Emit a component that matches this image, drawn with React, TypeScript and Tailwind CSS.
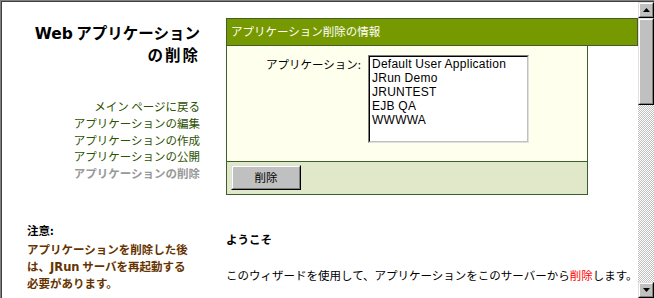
// Legacy JRun admin page: "Web アプリケーションの削除" wizard inside a classic window frame.
const JP = "font-['Noto_Sans_CJK_JP','Liberation_Sans',sans-serif]";

const NAV = [
  { label: "メイン ページに戻る", current: false },
  { label: "アプリケーションの編集", current: false },
  { label: "アプリケーションの作成", current: false },
  { label: "アプリケーションの公開", current: false },
  { label: "アプリケーションの削除", current: true },
];

const APPS = ["Default User Application", "JRun Demo", "JRUNTEST", "EJB QA", "WWWWA"];

function Bevel({ className, children }: { className?: string; children?: React.ReactNode }) {
  return (
    <div className={`border border-t-[#dfdfdf] border-l-[#dfdfdf] border-r-black border-b-black bg-[#c0c0c0] ${className ?? ""}`}>
      <div className="flex h-full w-full items-center justify-center border border-t-white border-l-white border-r-[#808080] border-b-[#808080]">
        {children}
      </div>
    </div>
  );
}

function Arrow({ down }: { down?: boolean }) {
  return (
    <svg width="7" height="4" viewBox="0 0 7 4">
      <path d={down ? "M0 0h7L3.5 4z" : "M3.5 0L7 4H0z"} fill="black" />
    </svg>
  );
}

function Scrollbar() {
  return (
    <div className="flex w-[16px] shrink-0 flex-col bg-[repeating-conic-gradient(#c0c0c0_0_25%,#ffffff_0_50%)] bg-[length:2px_2px]">
      <Bevel className="h-[16px] w-[16px]">
        <Arrow />
      </Bevel>
      <Bevel className="h-[87px] w-[16px]" />
      <div className="flex-1" />
      <Bevel className="h-[16px] w-[16px]">
        <Arrow down />
      </Bevel>
    </div>
  );
}

export default function App() {
  return (
    <div className={`h-[298px] w-[654px] overflow-hidden bg-white ${JP}`}>
      <div className="h-full border-t border-l border-[#808080]">
        <div className="flex h-full border-t border-l border-[#404040]">
          <div className="flex min-w-0 flex-1">
            {/* left column */}
            <div className="flex w-[198px] shrink-0 flex-col pl-[25px]">
              <h1 className="mt-[20px] text-right text-[15.5px] font-bold leading-[20px] text-black">
                <span className="font-['DejaVu_Sans','Noto_Sans_CJK_JP',sans-serif]">Web</span> アプリケーション
                <br />
                <span className="tracking-[2px]">の削除</span>
              </h1>
              <nav className="mt-[34px] flex flex-col items-end text-[11.5px] leading-[16.75px]">
                {NAV.map((item) =>
                  item.current ? (
                    <span key={item.label} className="font-bold text-[#999999]">
                      {item.label}
                    </span>
                  ) : (
                    <a key={item.label} className="text-[#2d5200]">
                      {item.label}
                    </a>
                  )
                )}
              </nav>
              <div className="mt-[40px] text-[11.5px] font-bold">
                <p className="leading-[17px] text-black">注意:</p>
                <p className="mt-[2px] leading-[16.75px] text-[#663300]">
                  アプリケーションを削除した後
                  <br />
                  は、<span className="font-['DejaVu_Sans',sans-serif]">JRun</span> サーバを再起動する
                  <br />
                  必要があります。
                </p>
              </div>
            </div>

            {/* main column */}
            <div className="ml-[26px] flex min-w-0 flex-1 flex-col pt-[16px]">
              <div className="flex h-[28px] items-center border border-[#3b5e2b] bg-[#779900] pl-[4px] text-[11.5px] text-white">
                アプリケーション削除の情報
              </div>
              <div className="w-[362px] border border-t-0 border-[#3b5e2b]">
                <div className="flex bg-[#ffffee] pt-[9px] pb-[18px]">
                  <span className="w-[134px] pt-[2px] text-right text-[11.5px] leading-[14px] text-black">アプリケーション:</span>
                  <div className="ml-[7px] h-[88px] w-[161px] border border-t-[#808080] border-l-[#808080] border-r-[#dfdfdf] border-b-[#dfdfdf] bg-[#c0c0c0]">
                    <div className="h-full border border-black border-r-[#c0c0c0] border-b-[#c0c0c0] bg-white pl-[2px] font-['Liberation_Sans',sans-serif] text-[12px] leading-[14px] tracking-[0.25px] text-black">
                      {APPS.map((a) => (
                        <div key={a} className="whitespace-nowrap">
                          {a}
                        </div>
                      ))}
                    </div>
                  </div>
                </div>
                <div className="h-[33px] border-t border-[#3b5e2b] bg-[#e1e7c9] pt-[3px] pl-[4px]">
                  <Bevel className="h-[25px] w-[70px]">
                    <span className="text-[11.5px] text-black">削除</span>
                  </Bevel>
                </div>
              </div>
              <p className="mt-[36px] text-[11.5px] font-bold leading-[17px] text-black">ようこそ</p>
              <p className="mt-[19px] whitespace-nowrap text-[11.5px] leading-[17px] text-black">
                このウィザードを使用して、アプリケーションをこのサーバーから<span className="text-[#ff0000]">削除</span>します。
              </p>
            </div>
          </div>
          <Scrollbar />
        </div>
      </div>
    </div>
  );
}
